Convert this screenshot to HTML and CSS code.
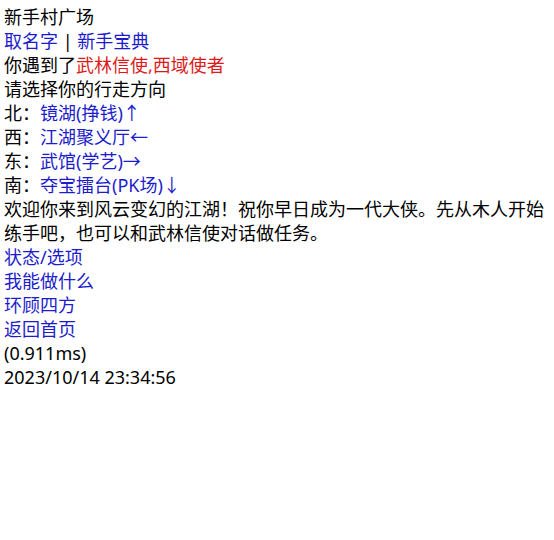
FILE: index.html
```html
<!DOCTYPE html>
<html lang="zh-CN">
<head>
  <meta charset="UTF-8" />
  <meta name="viewport" content="width=device-width, initial-scale=1.0"/>
  <title>新手村广场</title>
  <link rel="stylesheet" href="styles.css">
</head>
<body>
  <div class="page">
    <div>新手村广场</div>
    <div><a href="#">取名字</a> | <a href="#">新手宝典</a></div>
    <div>你遇到了<a class="npc" href="#">武林信使</a><span class="npc">,</span><a class="npc" href="#">西域使者</a></div>
    <div>请选择你的行走方向</div>

    <!-- 方向 -->
    <div>北：<a href="#">镜湖(挣钱)↑</a></div>
    <div>西：<a href="#">江湖聚义厅←</a></div>
    <div>东：<a href="#">武馆(学艺)→</a></div>
    <div>南：<a href="#">夺宝擂台(PK场)↓</a></div>

    <div>欢迎你来到风云变幻的江湖！祝你早日成为一代大侠。先从木人开始练手吧，也可以和武林信使对话做任务。</div>

    <!-- 菜单 -->
    <div><a href="#">状态/选项</a></div>
    <div><a href="#">我能做什么</a></div>
    <div><a href="#">环顾四方</a></div>
    <div><a href="#">返回首页</a></div>

    <div>(0.911ms)</div>
    <div>2023/10/14 23:34:56</div>
  </div>
</body>
</html>
```

FILE: styles.css
```css
body {
  margin: 0;
  background: #fff;
  color: #000;
  font-family: "Noto Sans", "Noto Sans CJK SC", sans-serif;
  font-size: 18px;
  line-height: 24px;
}

.page {
  padding: 5px 4px;
}

a {
  color: #1c1ccc;
  text-decoration: none;
}

.npc {
  color: #dd1a1a;
}
```
